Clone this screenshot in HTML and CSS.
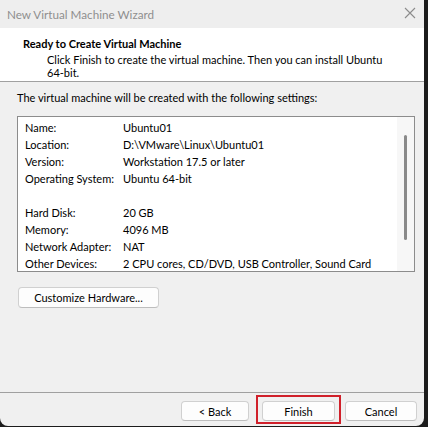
FILE: index.html
```html
<!DOCTYPE html>
<html>
<head>
<meta charset="utf-8">
<link rel="stylesheet" href="styles.css">
</head>
<body>
<div class="window">
  <div class="titlebar">
    <span class="title">New Virtual Machine Wizard</span>
    <svg class="close" width="12" height="12" viewBox="0 0 12 12"><path d="M1 1 L11 11 M11 1 L1 11" stroke="#8c8c8c" stroke-width="1.1" fill="none"/></svg>
  </div>
  <div class="header">
    <div class="h-title">Ready to Create Virtual Machine</div>
    <div class="h-desc">Click Finish to create the virtual machine. Then you can install Ubuntu<br>64-bit.</div>
  </div>
  <div class="content">
    <div class="intro">The virtual machine will be created with the following settings:</div>
    <div class="listbox">
      <div class="rows">
        <div class="row"><span class="lbl">Name:</span><span>Ubuntu01</span></div>
        <div class="row"><span class="lbl">Location:</span><span>D:\VMware\Linux\Ubuntu01</span></div>
        <div class="row"><span class="lbl">Version:</span><span>Workstation 17.5 or later</span></div>
        <div class="row"><span class="lbl">Operating System:</span><span>Ubuntu 64-bit</span></div>
        <div class="row"></div>
        <div class="row"><span class="lbl">Hard Disk:</span><span>20 GB</span></div>
        <div class="row"><span class="lbl">Memory:</span><span>4096 MB</span></div>
        <div class="row"><span class="lbl">Network Adapter:</span><span>NAT</span></div>
        <div class="row"><span class="lbl">Other Devices:</span><span>2 CPU cores, CD/DVD, USB Controller, Sound Card</span></div>
      </div>
      <div class="scrollbar"><div class="thumb"></div></div>
    </div>
    <button class="btn customize">Customize Hardware...</button>
  </div>
  <div class="footer">
    <button class="btn back">&lt; Back</button>
    <span class="highlight"><button class="btn finish">Finish</button></span>
    <button class="btn cancel">Cancel</button>
  </div>
</div>
</body>
</html>
```
FILE: styles.css
```css
html, body {
  margin: 0;
  padding: 0;
  background: #1c1c1c;
  width: 428px;
  height: 427px;
  overflow: hidden;
}
.window {
  width: 424px;
  height: 426px;
  background: #f0f0f0;
  border-radius: 0 0 8px 8px;
  display: flex;
  flex-direction: column;
  overflow: hidden;
  font-family: Lato, "Noto Sans", sans-serif;
  font-size: 11px;
  color: #000;
}
.titlebar {
  height: 28px;
  flex: none;
  display: flex;
  align-items: center;
  justify-content: space-between;
  padding: 0 8px 0 7px;
  background: #eeeeee;
}
.title {
  color: #8f8f8f;
  font-size: 11.7px;
}
.close {
  margin-top: -2px;
}
.header {
  flex: none;
  background: #ffffff;
  border-bottom: 1px solid #a0a0a0;
  padding: 8px 0 0 23px;
  box-sizing: border-box;
  height: 54px;
}
.h-title {
  font-weight: bold;
  line-height: 15px;
}
.h-desc {
  margin: 2px 0 0 24px;
  line-height: 13px;
}
.content {
  padding: 8px 9px 0 17px;
  flex: 1;
}
.intro {
  line-height: 15px;
}
.listbox {
  margin-top: 11px;
  height: 156px;
  box-sizing: border-box;
  border: 1px solid #8c8c8c;
  background: #ffffff;
  display: flex;
  overflow: hidden;
}
.rows {
  flex: 1;
  padding: 2px 0 0 7px;
}
.row {
  height: 17px;
  line-height: 17px;
  display: flex;
  white-space: nowrap;
}
.lbl {
  width: 98px;
  flex: none;
}
.scrollbar {
  width: 17px;
  flex: none;
  background: #f7f7f7;
  display: flex;
  justify-content: center;
  padding-top: 18px;
  box-sizing: border-box;
}
.thumb {
  width: 3px;
  height: 105px;
  border-radius: 2px;
  background: #8a8a8a;
}
.btn {
  font-family: inherit;
  font-size: 11px;
  background: #fdfdfd;
  border: 1px solid #d0d0d0;
  border-bottom-color: #bdbdbd;
  border-radius: 4px;
  padding: 0;
  color: #000;
  box-sizing: border-box;
}
.customize {
  margin: 15px 0 0 1px;
  width: 141px;
  height: 21px;
}
.footer {
  flex: none;
  height: 34px;
  box-sizing: border-box;
  border-top: 1px solid #a0a0a0;
  display: flex;
  justify-content: flex-end;
  align-items: flex-start;
  padding: 8px 7px 0 0;
}
.footer .btn {
  height: 20px;
}
.back {
  width: 68px;
  margin-right: 13px;
}
.finish {
  width: 73px;
  display: block;
}
.cancel {
  width: 72px;
  margin-left: 10px;
}
.highlight {
  position: relative;
  display: block;
}
.highlight::after {
  content: "";
  position: absolute;
  left: -6px;
  right: -6px;
  top: -6px;
  bottom: -3px;
  border: 2px solid #d0202a;
}
```
